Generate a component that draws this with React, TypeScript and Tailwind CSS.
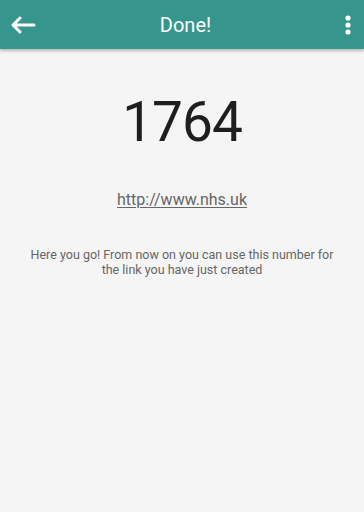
export default function App() {
  return (
    <div className="w-[364px] h-[512px] bg-[#f5f5f5] flex flex-col font-['Roboto',sans-serif] overflow-hidden">
      <div className="h-[49px] bg-[#36968d] flex items-center justify-between px-[10px] shadow-[0_2px_3px_rgba(0,0,0,0.25)] relative z-10 shrink-0">
        <svg width="26" height="20" viewBox="0 0 26 20" fill="none" stroke="white" strokeWidth="3" strokeLinecap="round" strokeLinejoin="round">
          <path d="M24 10H3M10 3L3 10L10 17" />
        </svg>
        <span className="text-white text-[20px] leading-none mr-[9px]">Done!</span>
        <svg width="8" height="20" viewBox="0 0 8 20" fill="white" className="mr-[2px]">
          <circle cx="4" cy="3" r="2.6" />
          <circle cx="4" cy="10" r="2.6" />
          <circle cx="4" cy="17" r="2.6" />
        </svg>
      </div>
      <div className="flex flex-col items-center pt-[46px]">
        <div className="text-[55px] leading-none text-[#1e1e1e] tracking-[-1px]">1764</div>
        <a className="mt-[42px] text-[16px] text-[#666] underline underline-offset-2 leading-none">http://www.nhs.uk</a>
        <p className="mt-[39px] text-[12.5px] leading-[15px] text-[#666] text-center px-[26px]">
          Here you go! From now on you can use this number for the link you have just created
        </p>
      </div>
    </div>
  )
}
